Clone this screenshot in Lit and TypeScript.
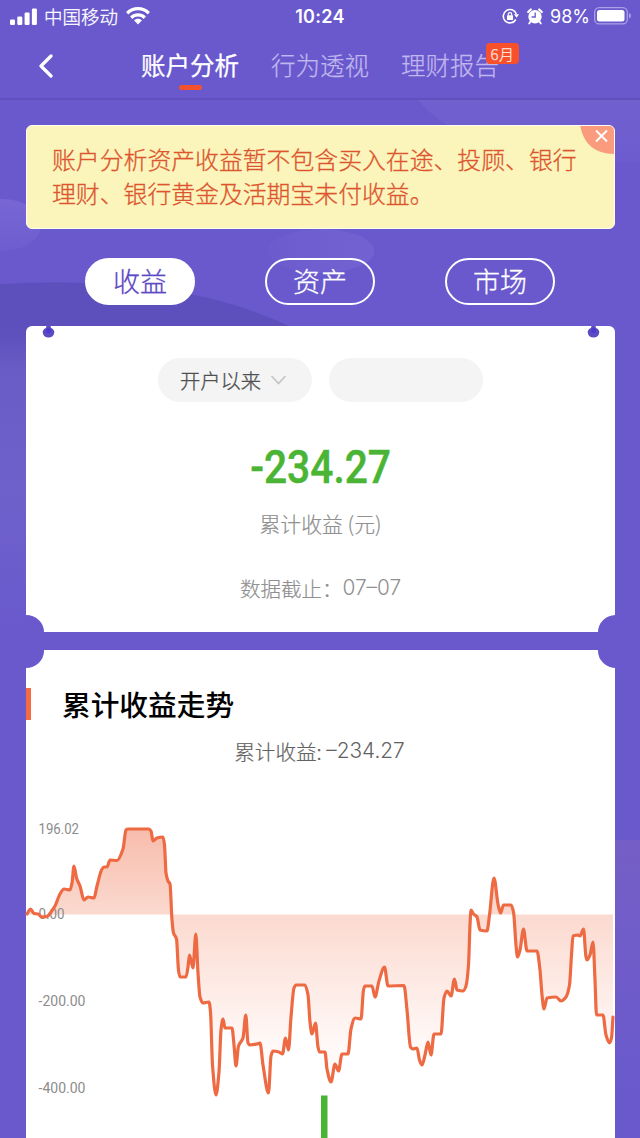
import { LitElement, html, svg, css } from "lit";
import { customElement, property, state } from "lit/decorators.js";
import { classMap } from "lit/directives/class-map.js";

type Point = [number, number];

// Curve samples in the coordinate space of the trend chart (589 x 330).
const TREND: Point[] = [
  [1,106],[4.5,101],[8,105.5],[12,106],[16,109],[21,108.5],[25,104],[29,98],[34,86],[38,81],[44,82],[46,75],[48,58],[50.5,70],[54,78],[58,92],[62,89],[68,90],[71,78],[76,61],[78,59],[81,59],[84,52],[91,52.5],[97,41],[100,22],[102,21],[123,21],[125,23],[127,33],[131,30],[137,29],[138.5,37],[140,65],[142,73],[144,76],[146,112],[147.5,125],[150.5,131],[152.5,162],[154,169],[160,169],[162,159],[163.5,147],[167,160],[169.8,126],[172,165],[174,189],[177,195],[183,194],[184.5,204],[186.5,257],[190,287],
  [193,264],[195,222],[197,211],[199,220],[206,220],[208,237],[210,258],[212.5,238],[217,230],[219.8,207],[222,235],[224,237],[231,236],[234,235],[237,257],[242.5,285],[245,248],[247,243],[253,244],[256.5,246],[259.5,230],[262.5,242],[265,209],[268,180],[270,177],[279,177],[282,187],[284,214],[286,226],[289.5,215],[292,239],[293.5,244],[299,244],[301,261],[305,274],[309,256],[312.5,263],[316,246],[322,246],[325,221],[329,210],[335,211],[337.5,182],[339,178],[346,178],[349,189],[353,173],[358.5,159],[362,178],[378,177.5],[381,202],[384.5,239],[387,241],[391,240],[393.5,252],
  [396,257],[399,247],[402,234],[405,247],[408,226],[415,226],[418,190],[421,183],[425,188],[428.5,171],[431,182],[437,183],[440,178],[442.5,157],[444,117],[445,102],[447.5,106],[451,109],[454,122],[461,123],[463.5,107],[468,70],[472,96],[474.5,105],[477.5,97],[485,97],[487.5,104],[490,137],[491.5,149],[494,142],[497.5,121],[501,143],[511,143],[514,162],[516,187],[518,201],[521,190],[530,189],[535,193],[540,189],[543.5,177],[545.5,147],[547,128],[552,127],[554,128],[557.5,121],[560,149],[561,152],[564,147],[567,134],[569,172],[570.5,207],[577,207],[580,227],[583.5,235],[585.5,230],[587,209],
];

const ZERO_Y = 106.5;

// Monotone cubic interpolation: smooth, with no overshoot on plateaus.
function smoothPath(p: Point[]): string {
  const n = p.length;
  const slope = (i: number) => (p[i + 1][1] - p[i][1]) / (p[i + 1][0] - p[i][0]);
  const tangent: number[] = [];
  for (let i = 0; i < n; i++) {
    if (i === 0) tangent.push(slope(0));
    else if (i === n - 1) tangent.push(slope(n - 2));
    else {
      const a = slope(i - 1);
      const b = slope(i);
      tangent.push(a * b <= 0 ? 0 : (2 * a * b) / (a + b));
    }
  }
  let d = `M${p[0][0]} ${p[0][1]}`;
  for (let i = 0; i < n - 1; i++) {
    const h = (p[i + 1][0] - p[i][0]) / 3;
    const y1 = p[i][1] + tangent[i] * h;
    const y2 = p[i + 1][1] - tangent[i + 1] * h;
    d += `C${(p[i][0] + h).toFixed(2)} ${y1.toFixed(2)} ${(p[i + 1][0] - h).toFixed(2)} ${y2.toFixed(2)} ${p[i + 1][0]} ${p[i + 1][1]}`;
  }
  return d;
}

@customElement("status-bar")
export class StatusBar extends LitElement {
  static styles = css`
    :host { display: grid; grid-template-columns: 1fr auto 1fr; align-items: center; height: 32px; padding: 0 8px 0 10px; color: #fff; font-size: 18.5px; }
    .side { display: flex; align-items: center; }
    .right { justify-content: flex-end; }
    .carrier { margin: 0 8px 0 7px; font-size: 18.5px; line-height: 32px; font-weight: 300; -webkit-text-stroke: 0.3px; }
    .time { font-family: Inter, "Liberation Sans", sans-serif; font-weight: 600; font-size: 18px; letter-spacing: 0.3px; margin-right: 2px; }
    .lock { margin-right: 8px; }
    .alarm { margin-right: 7px; }
    .percent { font-family: Inter, "Liberation Sans", sans-serif; font-size: 18px; margin-right: 4px; }
    svg { display: block; }
  `;
  render() {
    return html`
      <div class="side">
        <svg width="27" height="17" viewBox="0 0 27 17" fill="#fff">
          <rect x="0" y="11.5" width="5" height="5.5" rx="1.2" /><rect x="7.3" y="8.5" width="5" height="8.5" rx="1.2" />
          <rect x="14.6" y="4.5" width="5" height="12.5" rx="1.2" /><rect x="21.9" y="0.5" width="5" height="16.5" rx="1.2" />
        </svg>
        <span class="carrier">中国移动</span>
        <svg width="24" height="18" viewBox="0 0 24 18">
          <g fill="none" stroke="#fff" stroke-width="3.3"><path d="M1.2 6.200C7.3.2 16.700.2 22.800 6.200" /><path d="M5.200 10.700C9 7 15 7 18.800 10.700" /></g>
          <path d="M8 13.300C10.200 11.200 13.800 11.200 16 13.300L12 17.400Z" fill="#fff" />
        </svg>
      </div>
      <span class="time">10:24</span>
      <div class="side right">
        <svg class="lock" width="17" height="17" viewBox="0 0 17 17">
          <path d="M14.300 6A6.700 6.700 0 1 0 13.800 11.500" fill="none" stroke="#fff" stroke-width="1.600" />
          <path d="M11.900 6.300H17L14.600 9.800Z" fill="#fff" />
          <rect x="5" y="7.300" width="6" height="4.700" rx=".6" fill="#fff" /><path d="M6.300 7.500V6.300a1.700 1.700 0 0 1 3.400 0V7.500" fill="none" stroke="#fff" stroke-width="1.200" />
        </svg>
        <svg class="alarm" width="16" height="17" viewBox="0 0 16 17">
          <circle cx="8" cy="8.800" r="6.700" fill="#fff" />
          <path d="M1.200 4 3.800 1.500M14.800 4 12.200 1.500" stroke="#fff" stroke-width="2.200" stroke-linecap="round" />
          <path d="M3.500 13.500 2.200 15.500M12.500 13.500l1.300 2" stroke="#fff" stroke-width="1.800" stroke-linecap="round" />
          <path d="M8.200 4.600V9H4.600" fill="none" stroke="#6959cd" stroke-width="1.300" />
        </svg>
        <span class="percent">98%</span>
        <svg width="38" height="18" viewBox="0 0 38 18">
          <rect x=".7" y=".7" width="32.600" height="16.200" rx="4.500" fill="none" stroke="#aaa0e6" stroke-width="1.300" />
          <rect x="3" y="3" width="27.500" height="11.600" rx="2.500" fill="#fff" /><path d="M35 6V11.600Q37 11 37 8.800T35 6Z" fill="#aaa0e6" />
        </svg>
      </div>`;
  }
}

@customElement("nav-tabs")
export class NavTabs extends LitElement {
  @property() active = "账户分析";
  static styles = css`
    :host { display: flex; height: 66px; border-bottom: 2px solid #5f50bd; box-sizing: content-box; }
    .back { width: 141px; box-sizing: border-box; padding: 22px 0 0 38px; }
    .tabs { display: flex; gap: 32px; }
    .tab { position: relative; font-size: 24.500px; line-height: 36px; height: 58px; padding-top: 15px; box-sizing: border-box; color: #c0b7ee; font-weight: 300; -webkit-text-stroke: 0.25px; white-space: nowrap; display: flex; flex-direction: column; align-items: center; }
    .on { color: #fff; font-weight: 400; }
    .mark { width: 23px; height: 5px; border-radius: 3px; background: #f4522f; margin-top: 2px; }
    .badge { position: absolute; left: 85px; top: 11px; width: 33px; height: 21px; border-radius: 4px; background: #f8502a; color: #ffe9e2; font-size: 15px; line-height: 21px; text-align: center; letter-spacing: 0.500px; }
  `;
  render() {
    const tabs = [{ name: "账户分析" }, { name: "行为透视" }, { name: "理财报告", badge: "6月" }];
    return html`
      <div class="back"><svg width="16" height="25" viewBox="0 0 16 25"><path d="M13 2 3 12 13 22" fill="none" stroke="#fff" stroke-width="3.200" stroke-linecap="round" stroke-linejoin="round" /></svg></div>
      <div class="tabs">
        ${tabs.map((t) => html`<div class=${classMap({ tab: true, on: t.name === this.active })}>
          <span>${t.name}</span>
          ${t.name === this.active ? html`<i class="mark"></i>` : ""}
          ${t.badge ? html`<span class="badge">${t.badge}</span>` : ""}
        </div>`)}
      </div>`;
  }
}

@customElement("trend-chart")
export class TrendChart extends LitElement {
  static styles = css`
    :host { display: block; height: 330px; }
    svg { display: block; overflow: visible; }
    .axis { font: 400 15px Roboto, "Liberation Sans", sans-serif; fill: #8c8c8c; }
  `;
  render() {
    const line = smoothPath(TREND);
    const labels = [
      { text: "196.02", y: 26, w: 40.500 }, { text: "0.00", y: 111, w: 26 },
      { text: "-200.00", y: 198, w: 47 }, { text: "-400.00", y: 285, w: 47 },
    ];
    return html`<svg width="589" height="330" viewBox="0 0 589 330">
      <defs><linearGradient id="fade" gradientUnits="userSpaceOnUse" x1="0" y1="20" x2="0" y2="287">
        <stop offset="0" stop-color="#f7bcab" /><stop offset=".33" stop-color="#fbdad0" /><stop offset=".8" stop-color="#fff8f6" /><stop offset="1" stop-color="#fff" />
      </linearGradient></defs>
      <path d="${line}V${ZERO_Y}H1Z" fill="url(#fade)" />
      ${labels.map((l) => svg`<text class="axis" x="12.500" y=${l.y} textLength=${l.w} lengthAdjust="spacingAndGlyphs">${l.text}</text>`)}
      <path d=${line} fill="none" stroke="#ee6a43" stroke-width="3.200" stroke-linejoin="round" stroke-linecap="round" />
      <rect x="295" y="287.500" width="6.500" height="42.500" fill="#4ab434" />
    </svg>`;
  }
}

@customElement("app-root")
export class AppRoot extends LitElement {
  @state() private section = "收益";
  static styles = css`
    :host { display: block; position: relative; width: 640px; height: 1138px; overflow: hidden; background: #6959cd; font-family: "Noto Sans CJK SC", sans-serif; }
    .scene { position: absolute; inset: 0; z-index: 0; }
    .page { position: relative; z-index: 1; display: flex; flex-direction: column; }
    .notice { position: relative; margin: 25px 25px 0 26px; height: 104px; box-sizing: border-box; padding: 16px 25px; border-radius: 6px; background: #fbf5bc; border: 1px solid #fffdf0; color: #dc552e; font-size: 23.850px; line-height: 34px; font-weight: 300; -webkit-text-stroke: 0.3px; overflow: hidden; }
    .line { white-space: nowrap; display: block; }
    .close { position: absolute; right: -1px; top: -1px; display: block; }
    .pills { display: flex; justify-content: space-between; padding: 29px 85px 0 85px; }
    .pill { width: 110px; height: 47px; box-sizing: border-box; border: 2px solid #fff; border-radius: 24px; color: #fff; font-size: 27px; line-height: 42px; text-align: center; font-weight: 300; -webkit-text-stroke: 0.3px; }
    .chosen { background: #fff; color: #5b48c4; }
    .card { position: relative; margin: 0 25px 0 26px; background: #fff; }
    .summary { margin-top: 21px; height: 306px; border-radius: 6px 6px 0 0; display: flex; flex-direction: column; align-items: center; overflow: hidden; }
    .pin { position: absolute; top: 0; }
    .pin-l { left: 16px; } .pin-r { right: 15px; }
    .filters { display: flex; gap: 17px; margin-top: 32px; }
    .filter { width: 154px; height: 44px; box-sizing: border-box; border-radius: 22px; background: #f4f4f4; color: #505050; font-size: 20.300px; line-height: 44px; padding-left: 22px; display: flex; align-items: center; gap: 9px; font-weight: 300; -webkit-text-stroke: 0.3px; }
    .amount { font: 500 46px/54px Roboto, "Liberation Sans", sans-serif; color: #4ab434; margin-top: 38px; transform: scaleX(0.885); -webkit-text-stroke: 0.5px; }
    .caption { color: #909090; font-size: 20.900px; line-height: 30px; font-weight: 300; -webkit-text-stroke: 0.2px; margin-top: 14px; white-space: pre; }
    .date { color: #909090; font-size: 20.500px; line-height: 30px; font-weight: 300; -webkit-text-stroke: 0.2px; margin-top: 35px; display: flex; }
    .digits { font-family: Inter, sans-serif; font-size: 20.800px; -webkit-text-stroke: 0; }
    .trend { margin-top: 18px; height: 488px; }
    .heading { display: flex; align-items: center; padding-top: 38px; height: 32px; }
    .bar { width: 5px; height: 32px; background: #f56a42; }
    .title { margin-left: 31px; color: #000; font-size: 28.700px; line-height: 32px; font-weight: 500; }
    .total { display: flex; justify-content: center; height: 30px; margin-top: 16px; line-height: 30px; font-size: 20.600px; color: #626262; font-weight: 300; -webkit-text-stroke: 0.2px; white-space: pre; padding-right: 2px; }
    .trend-chart { margin-top: 42px; }
    .notch { position: absolute; width: 36px; height: 34px; border-radius: 50%; background: #6959cd; z-index: 1; }
    .bl { left: -18px; bottom: -17px; } .br { right: -19px; bottom: -17px; }
    .tl { left: -18px; top: -16px; } .tr { right: -19px; top: -16px; }
  `;
  private pin(side: string) {
    return html`<svg class="pin ${side}" width="13" height="13" viewBox="0 0 13 13"><path d="M4.500 0H8.500L9 2Q12.500 3.500 12.300 6.500Q11.500 11.500 6.500 11.500T.7 6.500Q.5 3.500 4 2Z" fill="#5b4bc0" /><circle cx="6.500" cy="4.500" r="2.600" fill="#5038cf" /></svg>`;
  }
  render() {
    return html`
      <svg class="scene" width="640" height="1138" viewBox="0 0 640 1138">
        <defs>
          <linearGradient id="hill" gradientUnits="userSpaceOnUse" x1="0" y1="284" x2="0" y2="630"><stop offset="0" stop-color="#5d50bc" /><stop offset=".14" stop-color="#5e50bc" /><stop offset=".25" stop-color="#6a5cc6" /><stop offset=".6" stop-color="#6f61cb" /><stop offset="1" stop-color="#6959cd" /></linearGradient>
          <linearGradient id="blob" x1="0" y1="0" x2="0" y2="1"><stop offset="0" stop-color="#7866d4" /><stop offset="1" stop-color="#6d5dcf" /></linearGradient>
          <linearGradient id="puff" x1="0" y1="0" x2="1" y2="0"><stop offset="0" stop-color="#6b5bce" /><stop offset="1" stop-color="#7363d1" /></linearGradient>
          <linearGradient id="sky" x1="0" y1="0" x2="0" y2="1"><stop offset="0" stop-color="#7161cf" /><stop offset="1" stop-color="#6b5bce" /></linearGradient>
          <linearGradient id="glow" x1="0" y1="0" x2="0" y2="1"><stop offset="0" stop-color="#755fc6" /><stop offset="1" stop-color="#6959cd" /></linearGradient>
        </defs>
        <path d="M418 100H640V163H560Q455 145 418 100Z" fill="url(#sky)" />
        <ellipse cx="2" cy="225" rx="39" ry="26" fill="url(#blob)" />
        <ellipse cx="321" cy="251" rx="53" ry="22" fill="url(#puff)" />
        <path d="M0 284Q100 278 185 293Q245 304 300 331V630H0Z" fill="url(#hill)" />
        <rect x="600" y="840" width="40" height="265" fill="url(#glow)" />
      </svg>
      <div class="page">
        <status-bar></status-bar>
        <nav-tabs></nav-tabs>
        <div class="notice">
          <span class="line">账户分析资产收益暂不包含买入在途、投顾、银行</span>
          <span class="line">理财、银行黄金及活期宝未付收益。</span>
          <svg class="close" width="35" height="29" viewBox="0 0 35 29"><path d="M0 0H35V29Q5 29 0 0Z" fill="#fa9b7e" /><path d="M16 5.500 27 16.500M27 5.500 16 16.500" stroke="#fff" stroke-width="1.900" /></svg>
        </div>
        <div class="pills">
          ${["收益", "资产", "市场"].map((n) => html`<div class=${classMap({ pill: true, chosen: n === this.section })} @click=${() => (this.section = n)}>${n}</div>`)}
        </div>
        <section class="card summary">
          ${this.pin("pin-l")}${this.pin("pin-r")}
          <div class="filters">
            <div class="filter">开户以来<svg width="17" height="12" viewBox="0 0 17 12"><path d="M1.500 2 8.500 9.500 15.500 2" fill="none" stroke="#c4c4c4" stroke-width="1.700" /></svg></div>
            <div class="filter"></div>
          </div>
          <div class="amount">-234.27</div>
          <div class="caption">累计收益 (元)</div>
          <div class="date">数据截止：<span class="digits">07–07</span></div>
          <i class="notch bl"></i><i class="notch br"></i>
        </section>
        <section class="card trend">
          <i class="notch tl"></i><i class="notch tr"></i>
          <div class="heading"><i class="bar"></i><span class="title">累计收益走势</span></div>
          <div class="total">累计收益: <span class="digits">–234.27</span></div>
          <trend-chart class="trend-chart"></trend-chart>
        </section>
      </div>`;
  }
}
